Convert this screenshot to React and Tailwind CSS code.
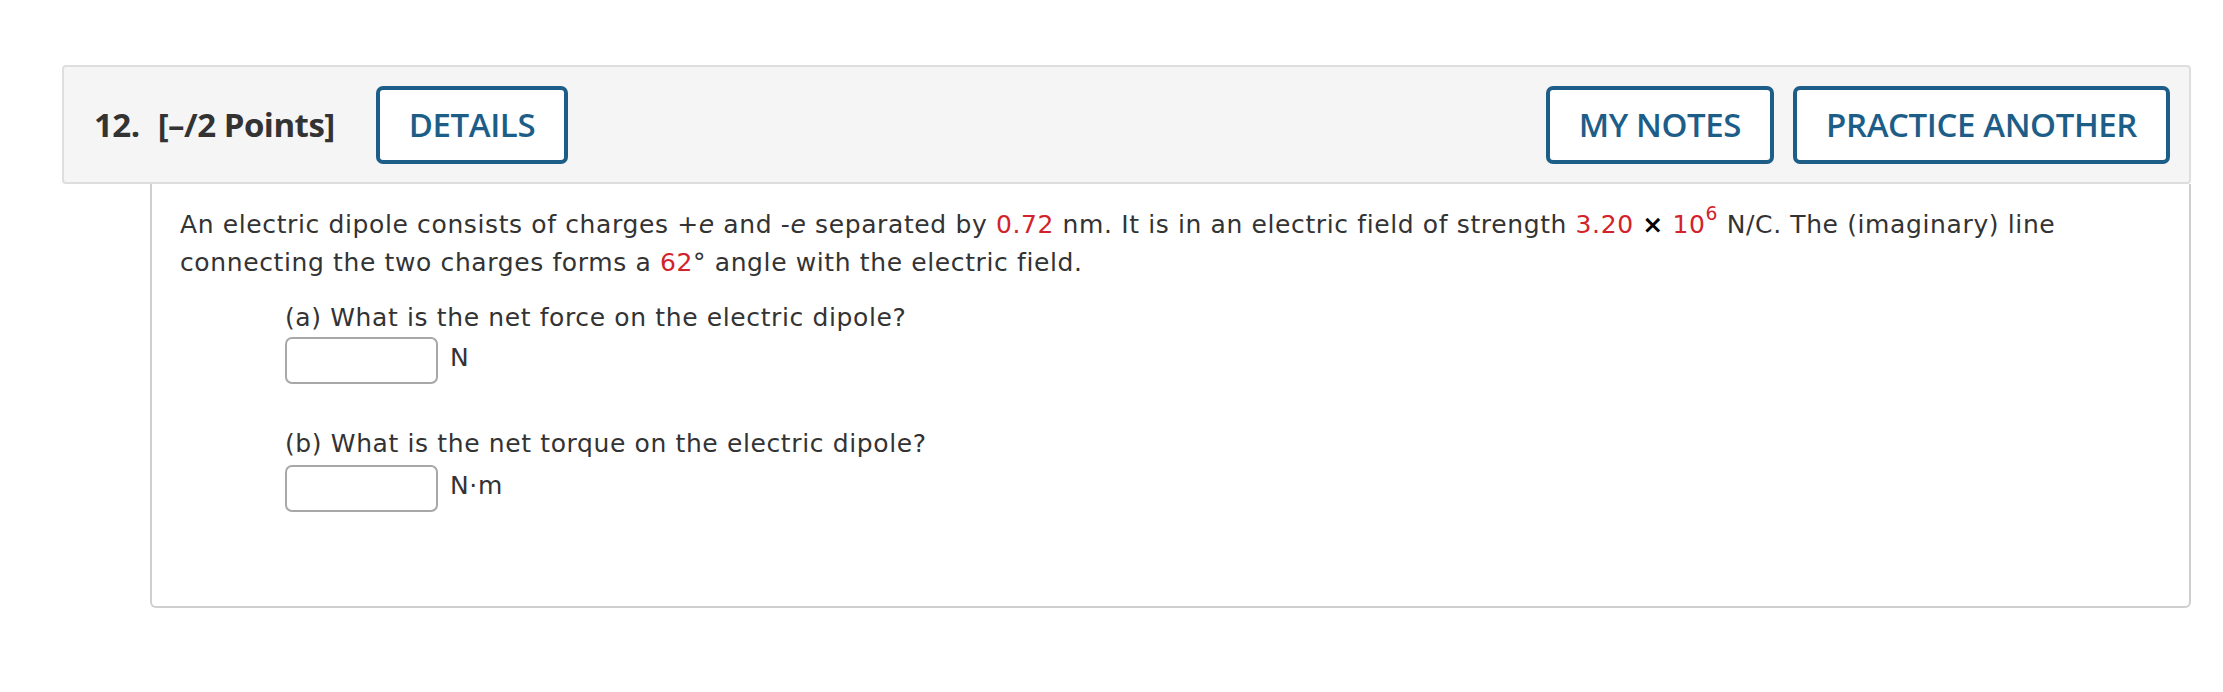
import React from "react";

const Red = ({ children }) => <span className="text-[#d2232a]">{children}</span>;

function Btn({ children }) {
  return (
    <button
      type="button"
      className="h-[78px] px-[29px] border-[4px] border-[#1d5e89] rounded-[7px] bg-white text-[#1d5e89] text-[33px] font-semibold tracking-[-0.4px] leading-none"
      style={{ fontFamily: '"Open Sans", "Liberation Sans", sans-serif' }}
    >
      {children}
    </button>
  );
}

function Answer({ unit }) {
  return (
    <div className="flex items-center gap-[12px]">
      <div className="w-[153px] h-[47px] border-2 border-[#a8a8a8] rounded-[7px] bg-white" />
      <span className="-mt-[6px]">{unit}</span>
    </div>
  );
}

export default function App() {
  return (
    <div className="min-h-[692px] bg-white pt-[65px] pl-[62px] pr-[32px]">
      <div
        className="flex items-center h-[119px] bg-[#f5f5f5] border-2 border-[#dedede] rounded-[4px] pl-[30px] pr-[19px] text-[#333]"
        style={{ fontFamily: '"Open Sans", "Liberation Sans", sans-serif' }}
      >
        <span className="text-[33px] font-bold tracking-[-0.5px]">12.</span>
        <span className="ml-[18px] text-[33px] font-bold tracking-[-0.5px]">[–/2 Points]</span>
        <div className="ml-[41px]">
          <Btn>DETAILS</Btn>
        </div>
        <div className="ml-auto flex gap-[19px]">
          <Btn>MY NOTES</Btn>
          <Btn>PRACTICE ANOTHER</Btn>
        </div>
      </div>
      <div
        className="ml-[88px] h-[424px] border-2 border-t-0 border-[#cfcfcf] rounded-b-[6px] pt-[22px] pl-[28px] text-[#333] text-[25px] leading-[38px] tracking-[0.62px]"
        style={{ fontFamily: '"DejaVu Sans", Verdana, sans-serif' }}
      >
        <p>
          An electric dipole consists of charges +<i>e</i> and -<i>e</i> separated by <Red>0.72</Red> nm. It is in an
          electric field of strength <Red>3.20</Red> <span className="font-bold text-black">×</span>{" "}
          <Red>
            10<sup className="top-[-0.7em]">6</sup>
          </Red>{" "}
          N/C. The (imaginary) line
          <br />
          connecting the two charges forms a <Red>62</Red>° angle with the electric field.
        </p>
        <div className="pl-[105px] mt-[17px]">
          <p>(a) What is the net force on the electric dipole?</p>
          <Answer unit="N" />
          <p className="mt-[41px]">(b) What is the net torque on the electric dipole?</p>
          <div className="mt-[2px]">
            <Answer unit="N·m" />
          </div>
        </div>
      </div>
    </div>
  );
}
